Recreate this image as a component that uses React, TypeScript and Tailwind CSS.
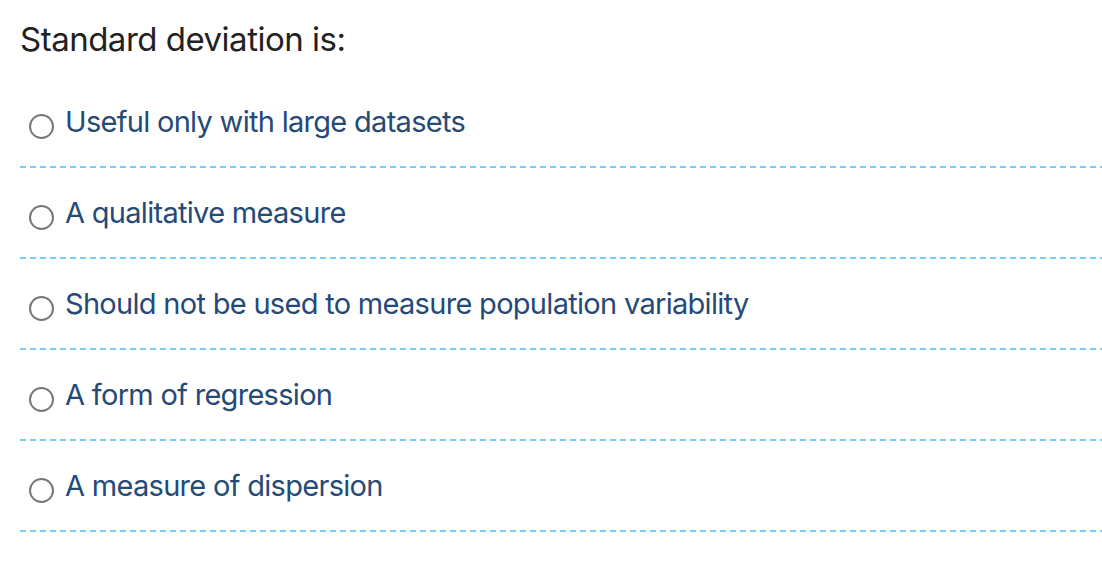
const options = [
  'Useful only with large datasets',
  'A qualitative measure',
  'Should not be used to measure population variability',
  'A form of regression',
  'A measure of dispersion',
];

export default function App() {
  return (
    <main className="min-h-screen bg-white pl-5" style={{ fontFamily: 'Inter, "Noto Sans", sans-serif' }}>
      <h1 className="h-[77px] pt-[14px] text-[33px] leading-[50px] tracking-[-0.5px] text-[#222222]">
        Standard deviation is:
      </h1>
      <div className="flex flex-col">
        {options.map((o) => (
          <div key={o} className="flex flex-col">
            <label className="flex h-[89px] items-center">
              <span className="ml-[9px] mr-[11px] mt-[9px] h-[25px] w-[25px] shrink-0 rounded-full border-2 border-[#777777] bg-white" />
              <span className="text-[29px] leading-[40px] tracking-[-0.7px] text-[#264a77]">{o}</span>
            </label>
            <div className="h-[2px] w-full bg-[repeating-linear-gradient(90deg,#78ccf5_0px,#78ccf5_6px,transparent_6px,transparent_10px)]" />
          </div>
        ))}
      </div>
    </main>
  );
}
